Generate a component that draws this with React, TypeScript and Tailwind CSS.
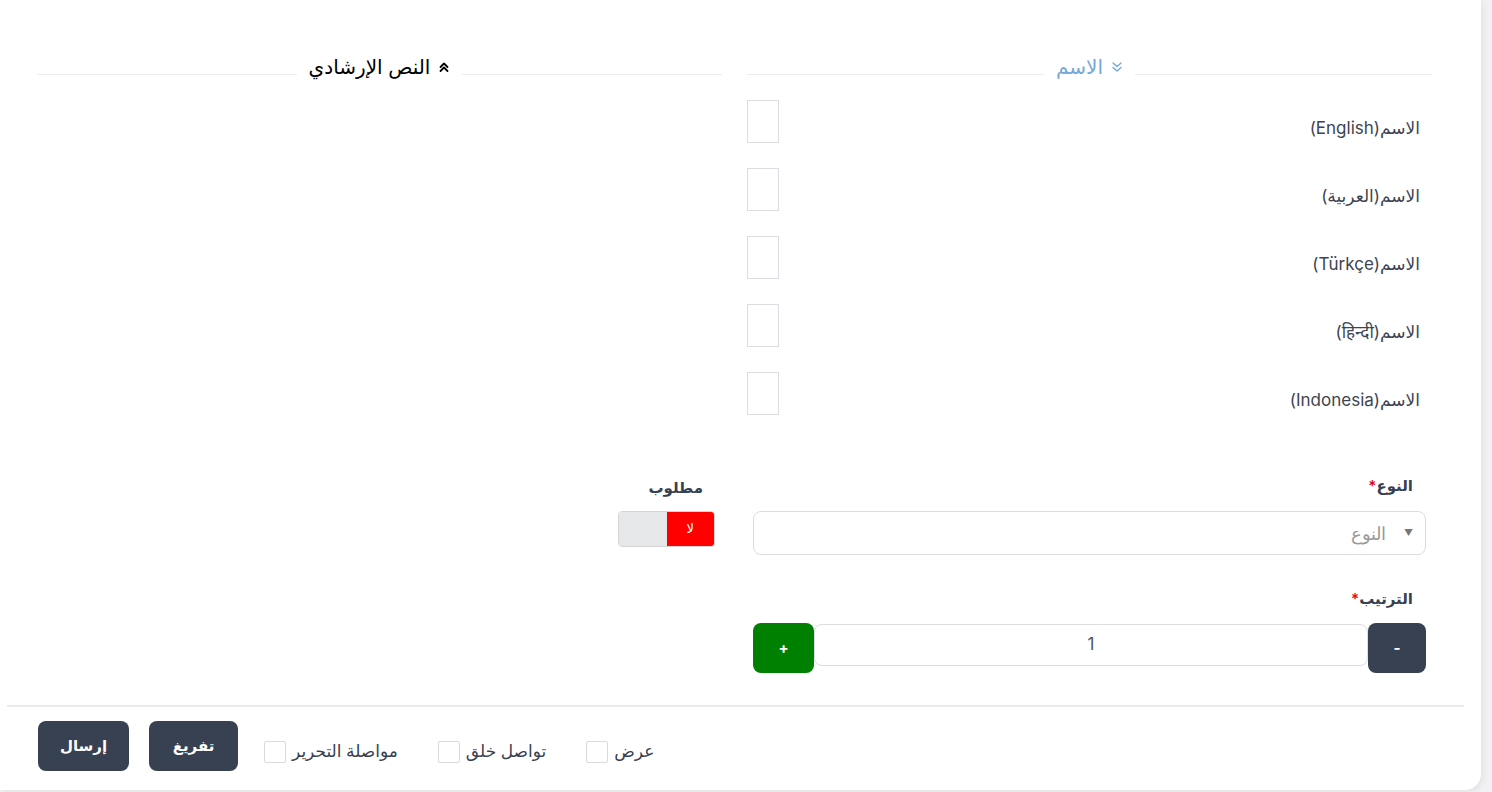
import React from "react";

const langs = ["English", "العربية", "Türkçe", "हिन्दी", "Indonesia"];

function Chevrons({ up }: { up?: boolean }) {
  return (
    <svg
      width="12"
      height="12"
      viewBox="0 0 12 12"
      fill="none"
      stroke="currentColor"
      strokeWidth={up ? 1.8 : 1.4}
      strokeLinecap="round"
      strokeLinejoin="round"
    >
      {up ? (
        <>
          <path d="M2.5 6 L6 2.5 L9.5 6" />
          <path d="M2.5 10 L6 6.5 L9.5 10" />
        </>
      ) : (
        <>
          <path d="M2 2 L6 5.5 L10 2" />
          <path d="M2 6.5 L6 10 L10 6.5" />
        </>
      )}
    </svg>
  );
}

function SectionTitle({
  title,
  open,
  className,
}: {
  title: string;
  open?: boolean;
  className?: string;
}) {
  return (
    <div className="flex items-center h-[28px]">
      <div className="flex-1 h-px bg-[#ececf0] mt-[14px]" />
      <div className={`flex items-center gap-[8px] px-3 ${className}`}>
        <Chevrons up={open} />
        <span className="text-[20px] leading-[28px]">{title}</span>
      </div>
      <div className="flex-1 h-px bg-[#ececf0] mt-[14px]" />
    </div>
  );
}

function Check({ label }: { label: string }) {
  return (
    <label className="flex items-center gap-[6px]">
      <span className="w-[22px] h-[22px] border border-[#d9d9de] rounded-[2px] bg-white" />
      <span dir="rtl" className="text-[17px] font-medium text-[#374151]">
        {label}
      </span>
    </label>
  );
}

export default function App() {
  return (
    <div
      className="min-h-screen bg-[#f1f1f4] pr-[11px]"
      style={{ fontFamily: '"Inter", "DejaVu Sans", "Noto Sans", sans-serif' }}
    >
      <div className="bg-white rounded-br-2xl shadow-[2px_2px_6px_rgba(0,0,0,0.06)] h-[790px] flex flex-col">
        <div dir="rtl" className="grid grid-cols-2 gap-[25px] pr-[49px] pl-[37px] pt-[53px]">
          {/* right column */}
          <div>
            <SectionTitle title="الاسم" className="text-[#74a9d8]" />
            <div className="mt-[19px]">
              {langs.map((l) => (
                <div key={l} className="flex justify-between items-start h-[68px]">
                  <span className="pt-[16px] pr-3 text-[17px] leading-[24px] text-[#3d4452]">
                    الاسم({l})
                  </span>
                  <div className="w-[32px] h-[43px] border border-[#dcdce4]" />
                </div>
              ))}
            </div>
            <div className="mt-[35px] px-[6px]">
              <div className="pr-[13px] text-[15px] font-semibold text-[#374151] leading-[22px]">
                النوع<span className="text-red-600">*</span>
              </div>
              <div className="mt-[14px] h-[44px] border border-[#dcdce4] rounded-lg flex items-center pr-[12px] gap-[18px]">
                <span className="text-[9px] text-[#777]">▼</span>
                <span className="text-[18px] font-light text-[#9a9a9a]">النوع</span>
              </div>
              <div className="mt-[33px] pr-[13px] text-[15px] font-semibold text-[#374151] leading-[22px]">
                الترتيب<span className="text-red-600">*</span>
              </div>
              <div className="mt-[13px] flex items-start">
                <button className="w-[58px] h-[50px] bg-[#384152] rounded-lg text-white font-bold text-[15px]">
                  -
                </button>
                <div className="flex-1 h-[42px] mt-px border border-[#dcdce4] rounded-lg flex items-center justify-center text-[17px] text-[#4b5563]">
                  1
                </div>
                <button className="w-[61px] h-[50px] bg-[#008000] rounded-lg text-white font-bold text-[15px]">
                  +
                </button>
              </div>
            </div>
          </div>
          {/* left column */}
          <div>
            <SectionTitle
              title="النص الإرشادي"
              open
              className="text-black [font-family:'Liberation_Sans','DejaVu_Sans',sans-serif]"
            />
            <div className="mt-[396px] pr-[7px]">
              <div className="pr-[12px] text-[15px] font-semibold text-[#374151] leading-[22px]">
                مطلوب
              </div>
              <div className="mt-[12px] w-[97px] h-[36px] border border-[#d4d4d8] rounded-[4px] overflow-hidden flex">
                <div className="w-1/2 bg-[#ff0000] flex items-center justify-center text-white text-[13px]">
                  لا
                </div>
                <div className="w-1/2 bg-[#e6e7e9]" />
              </div>
            </div>
          </div>
        </div>
        <div className="mt-[32px] ml-[7px] mr-[17px] h-[2px] bg-[#ebebee]" />
        <div dir="ltr" className="flex items-center pl-[38px] pt-[14px]">
          <button className="w-[91px] h-[50px] bg-[#384152] rounded-lg text-white font-bold text-[15px]">
            إرسال
          </button>
          <button className="ml-[20px] w-[89px] h-[50px] bg-[#384152] rounded-lg text-white font-bold text-[15px]">
            تفريغ
          </button>
          <div className="ml-[26px] flex items-center gap-[40px] mt-[12px]">
            <Check label="مواصلة التحرير" />
            <Check label="تواصل خلق" />
            <Check label="عرض" />
          </div>
        </div>
      </div>
    </div>
  );
}
